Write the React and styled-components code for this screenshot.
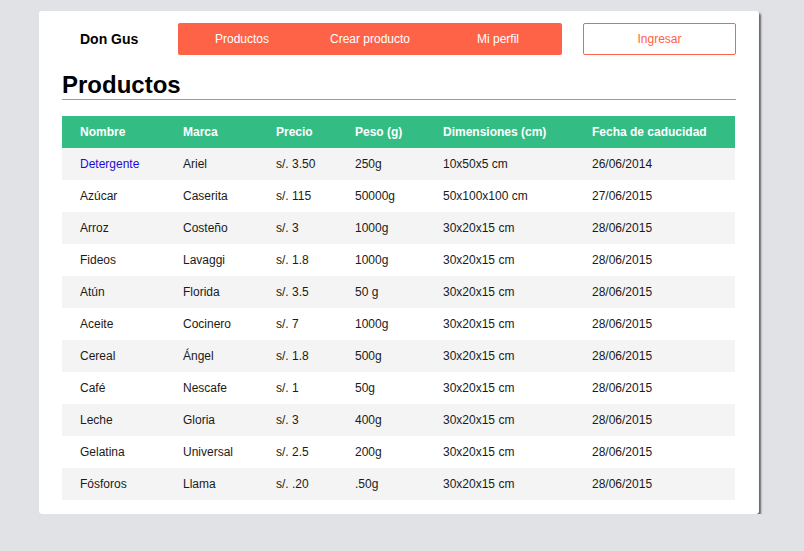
import React from "react";
import styled, { createGlobalStyle } from "styled-components";

const Global = createGlobalStyle`
  html, body { margin: 0; padding: 0; background: #e1e2e6; }
  body { font-family: "Liberation Sans", Arial, sans-serif; }
`;

const Card = styled.div`
  box-sizing: border-box;
  width: 720px;
  height: 503px;
  margin: 11px 0 0 39px;
  padding: 12px 23px 14px 23px;
  background: #fff;
  border-radius: 3px;
  box-shadow: 2px 2px 2px rgba(0, 0, 0, 0.55);
`;

const Nav = styled.nav`
  display: flex;
  align-items: stretch;
  height: 32px;
`;

const Brand = styled.div`
  width: 116px;
  box-sizing: border-box;
  padding-left: 18px;
  display: flex;
  align-items: center;
  font-size: 14px;
  font-weight: bold;
  color: #000;
`;

const Menu = styled.ul`
  display: flex;
  width: 384px;
  margin: 0;
  padding: 0;
  list-style: none;
  background: #ff6347;
  border-radius: 2px;
`;

const MenuItem = styled.li`
  flex: 1;
  display: flex;
  align-items: center;
  justify-content: center;
  color: #fff;
  font-size: 12px;
`;

const LoginButton = styled.button`
  margin-left: 21px;
  width: 153px;
  box-sizing: border-box;
  background: #fff;
  border: 1px solid #ff6347;
  border-radius: 2px;
  color: #ff6347;
  font-family: "Liberation Sans", Arial, sans-serif;
  font-size: 12px;
  padding: 0;
`;

const Title = styled.h1`
  margin: 16px 0 0 0;
  font-size: 24px;
  line-height: 28px;
  font-weight: bold;
  color: #000;
  border-bottom: 1px solid #9a9a9a;
`;

const Table = styled.table`
  margin-top: 16px;
  width: 673px;
  border-collapse: collapse;
  table-layout: fixed;
  font-size: 12px;
`;

const HeadCell = styled.th`
  height: 32px;
  padding: 0 0 0 18px;
  text-align: left;
  background: #33bd85;
  color: #fff;
  font-weight: bold;
`;

const Row = styled.tr`
  background: ${(p) => (p.$striped ? "#f4f4f4" : "#fff")};
`;

const Cell = styled.td`
  height: 32px;
  padding: 0 0 0 18px;
  color: #1a1a1a;
  white-space: nowrap;
`;

const Link = styled.a`
  color: #1a0dd8;
  text-decoration: none;
`;

const columns = [
  { label: "Nombre", width: 103 },
  { label: "Marca", width: 93 },
  { label: "Precio", width: 79 },
  { label: "Peso (g)", width: 88 },
  { label: "Dimensiones (cm)", width: 149 },
  { label: "Fecha de caducidad", width: 161 },
];

const rows = [
  ["Detergente", "Ariel", "s/. 3.50", "250g", "10x50x5 cm", "26/06/2014"],
  ["Azúcar", "Caserita", "s/. 115", "50000g", "50x100x100 cm", "27/06/2015"],
  ["Arroz", "Costeño", "s/. 3", "1000g", "30x20x15 cm", "28/06/2015"],
  ["Fideos", "Lavaggi", "s/. 1.8", "1000g", "30x20x15 cm", "28/06/2015"],
  ["Atún", "Florida", "s/. 3.5", "50 g", "30x20x15 cm", "28/06/2015"],
  ["Aceite", "Cocinero", "s/. 7", "1000g", "30x20x15 cm", "28/06/2015"],
  ["Cereal", "Ángel", "s/. 1.8", "500g", "30x20x15 cm", "28/06/2015"],
  ["Café", "Nescafe", "s/. 1", "50g", "30x20x15 cm", "28/06/2015"],
  ["Leche", "Gloria", "s/. 3", "400g", "30x20x15 cm", "28/06/2015"],
  ["Gelatina", "Universal", "s/. 2.5", "200g", "30x20x15 cm", "28/06/2015"],
  ["Fósforos", "Llama", "s/. .20", ".50g", "30x20x15 cm", "28/06/2015"],
];

export default function App() {
  return (
    <>
      <Global />
      <Card>
        <Nav>
          <Brand>Don Gus</Brand>
          <Menu>
            <MenuItem>Productos</MenuItem>
            <MenuItem>Crear producto</MenuItem>
            <MenuItem>Mi perfil</MenuItem>
          </Menu>
          <LoginButton>Ingresar</LoginButton>
        </Nav>
        <Title>Productos</Title>
        <Table>
          <colgroup>
            {columns.map((c) => (
              <col key={c.label} style={{ width: c.width }} />
            ))}
          </colgroup>
          <thead>
            <tr>
              {columns.map((c) => (
                <HeadCell key={c.label}>{c.label}</HeadCell>
              ))}
            </tr>
          </thead>
          <tbody>
            {rows.map((r, i) => (
              <Row key={i} $striped={i % 2 === 0}>
                {r.map((v, j) => (
                  <Cell key={j}>
                    {i === 0 && j === 0 ? <Link href="#">{v}</Link> : v}
                  </Cell>
                ))}
              </Row>
            ))}
          </tbody>
        </Table>
      </Card>
    </>
  );
}
